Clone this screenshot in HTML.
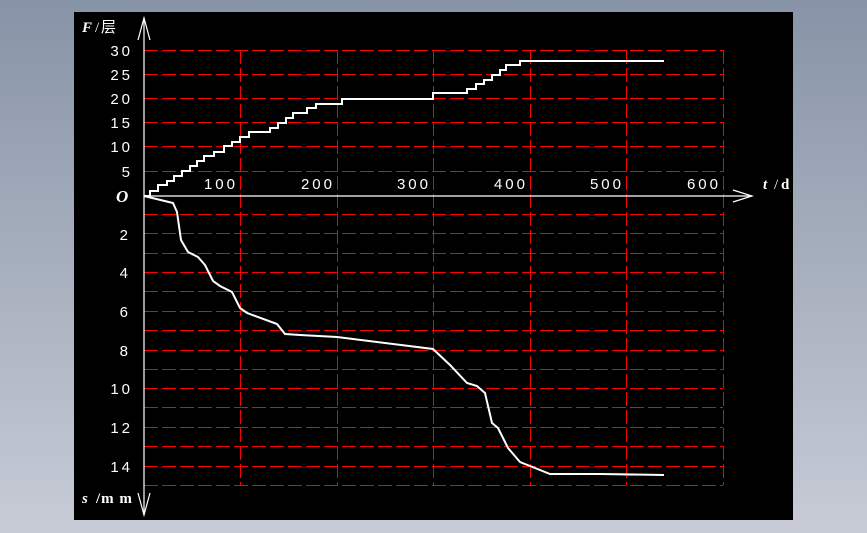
<!DOCTYPE html>
<html><head><meta charset="utf-8"><style>
html,body{margin:0;padding:0;width:867px;height:533px;overflow:hidden;background:linear-gradient(#8793a6,#c7ccd6);}
svg{position:absolute;left:0;top:0}
</style></head><body>
<svg width="867" height="533" viewBox="0 0 867 533" xmlns="http://www.w3.org/2000/svg">
<rect x="74" y="12" width="719" height="508" fill="#000"/>
<g stroke="#ff0000" stroke-width="1" stroke-dasharray="14,4" fill="none">
<path d="M144 50.5H723M144 74.5H723M144 98.5H723M144 122.5H723M144 146.5H723M144 171.5H723"/>
<path d="M144 214.5H723M144 233.5H723M144 253.5H723M144 272.5H723M144 291.5H723M144 311.5H723M144 330.5H723M144 350.5H723M144 369.5H723M144 388.5H723M144 407.5H723M144 427.5H723M144 446.5H723M144 466.5H723M144 485.5H723"/>
<path d="M240.5 50V485M337.5 50V485M433.5 50V485M530.5 50V485M626.5 50V485M723.5 50V485"/>
</g>
<g stroke="#fff" stroke-width="1.2" fill="none">
<path d="M144 18V515"/>
<path d="M138 40L144 18L150 40"/>
<path d="M138 493L144 515L150 493"/>
<path d="M144 196H752"/>
<path d="M733 190L752 196L733 202"/>
</g>
<g stroke="#fff" stroke-width="2" fill="none">
<polyline points="144,196 150,196 150,191 158,191 158,185 167,185 167,181 174,181 174,176 182,176 182,171 190,171 190,166 197,166 197,161 204,161 204,156 214,156 214,152 224,152 224,146 232,146 232,142 240,142 240,137 249,137 249,132 270,132 270,128 278,128 278,123 286,123 286,118 293,118 293,113 307,113 307,108 316,108 316,104 342,104 342,99 433,99 433,93 467,93 467,89 476,89 476,84 484,84 484,80 492,80 492,75 500,75 500,70 506,70 506,65 520,65 520,61 664,61"/>
<polyline points="144,196 173,203 177,212 181,240 188,252 198,257 205,265 213,281 220,286 232,292 240,308 247,313 277,324 285,334 300,335 337,337 433,349 450,365 467,383 477,386 485,393 492,423 498,428 508,448 520,462 530,466 550,474 600,474 664,475"/>
</g>
<g fill="#fff" font-family="Liberation Sans, sans-serif" font-size="15" letter-spacing="3" text-anchor="end">
<text x="133" y="56">30</text><text x="133" y="80">25</text><text x="133" y="104">20</text><text x="133" y="128">15</text><text x="133" y="152">10</text><text x="133" y="177">5</text>
<text x="131" y="240">2</text><text x="131" y="278">4</text><text x="131" y="317">6</text><text x="131" y="356">8</text><text x="133" y="394">10</text><text x="133" y="433">12</text><text x="133" y="472">14</text>
<text x="238" y="189">100</text><text x="335" y="189">200</text><text x="431" y="189">300</text><text x="528" y="189">400</text><text x="624" y="189">500</text><text x="721" y="189">600</text>
</g>
<g fill="#fff" font-family="Liberation Serif, 'Noto Serif CJK SC', serif" font-size="15">
<text x="82" y="32" font-style="italic" font-weight="bold">F</text>
<text x="95" y="32">/</text>
<text x="101" y="32" font-family="'Noto Sans CJK SC', sans-serif" font-size="15">层</text>
<text x="116" y="202" font-style="italic" font-weight="bold" font-size="17">O</text>
<text x="763" y="189" font-style="italic" font-weight="bold">t</text>
<text x="774" y="189">/</text>
<text x="781" y="189" font-weight="bold">d</text>
<text x="82" y="503" font-style="italic" font-weight="bold">s</text>
<text x="96" y="503" font-weight="bold" letter-spacing="1">/m m</text>
</g>
</svg>
</body></html>
